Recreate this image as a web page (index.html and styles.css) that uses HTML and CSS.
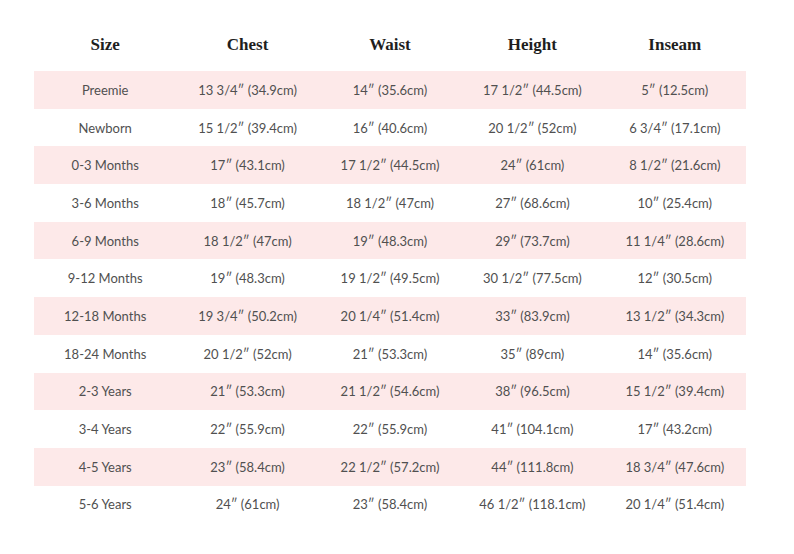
FILE: index.html
```html
<!DOCTYPE html>
<html>
<head>
<meta charset="utf-8">
<link rel="stylesheet" href="styles.css">
</head>
<body>
<div class="chart">
  <div class="row head">
    <div>Size</div><div>Chest</div><div>Waist</div><div>Height</div><div>Inseam</div>
  </div>
  <div class="row pink"><div>Preemie</div><div>13 3/4″ (34.9cm)</div><div>14″ (35.6cm)</div><div>17 1/2″ (44.5cm)</div><div>5″ (12.5cm)</div></div>
  <div class="row"><div>Newborn</div><div>15 1/2″ (39.4cm)</div><div>16″ (40.6cm)</div><div>20 1/2″ (52cm)</div><div>6 3/4″ (17.1cm)</div></div>
  <div class="row pink"><div>0-3 Months</div><div>17″ (43.1cm)</div><div>17 1/2″ (44.5cm)</div><div>24″ (61cm)</div><div>8 1/2″ (21.6cm)</div></div>
  <div class="row"><div>3-6 Months</div><div>18″ (45.7cm)</div><div>18 1/2″ (47cm)</div><div>27″ (68.6cm)</div><div>10″ (25.4cm)</div></div>
  <div class="row pink"><div>6-9 Months</div><div>18 1/2″ (47cm)</div><div>19″ (48.3cm)</div><div>29″ (73.7cm)</div><div>11 1/4″ (28.6cm)</div></div>
  <div class="row"><div>9-12 Months</div><div>19″ (48.3cm)</div><div>19 1/2″ (49.5cm)</div><div>30 1/2″ (77.5cm)</div><div>12″ (30.5cm)</div></div>
  <div class="row pink"><div>12-18 Months</div><div>19 3/4″ (50.2cm)</div><div>20 1/4″ (51.4cm)</div><div>33″ (83.9cm)</div><div>13 1/2″ (34.3cm)</div></div>
  <div class="row"><div>18-24 Months</div><div>20 1/2″ (52cm)</div><div>21″ (53.3cm)</div><div>35″ (89cm)</div><div>14″ (35.6cm)</div></div>
  <div class="row pink"><div>2-3 Years</div><div>21″ (53.3cm)</div><div>21 1/2″ (54.6cm)</div><div>38″ (96.5cm)</div><div>15 1/2″ (39.4cm)</div></div>
  <div class="row"><div>3-4 Years</div><div>22″ (55.9cm)</div><div>22″ (55.9cm)</div><div>41″ (104.1cm)</div><div>17″ (43.2cm)</div></div>
  <div class="row pink"><div>4-5 Years</div><div>23″ (58.4cm)</div><div>22 1/2″ (57.2cm)</div><div>44″ (111.8cm)</div><div>18 3/4″ (47.6cm)</div></div>
  <div class="row"><div>5-6 Years</div><div>24″ (61cm)</div><div>23″ (58.4cm)</div><div>46 1/2″ (118.1cm)</div><div>20 1/4″ (51.4cm)</div></div>
</div>
</body>
</html>
```
FILE: styles.css
```css
html, body {
  margin: 0;
  padding: 0;
  background: #ffffff;
}
.chart {
  width: 712px;
  margin-left: 34px;
  padding-top: 32px;
}
.row {
  display: grid;
  grid-template-columns: repeat(5, 1fr);
  height: 37.7px;
  align-items: center;
  text-align: center;
  font-family: "Lato", "Open Sans", sans-serif;
  font-size: 13px;
  color: #505050;
}
.row.pink {
  background: #fde9e9;
}
.row.head {
  height: 26px;
  margin-bottom: 13px;
  font-family: "Liberation Serif", "DejaVu Serif", serif;
  font-weight: bold;
  font-size: 17px;
  color: #1e1e1e;
}
```
